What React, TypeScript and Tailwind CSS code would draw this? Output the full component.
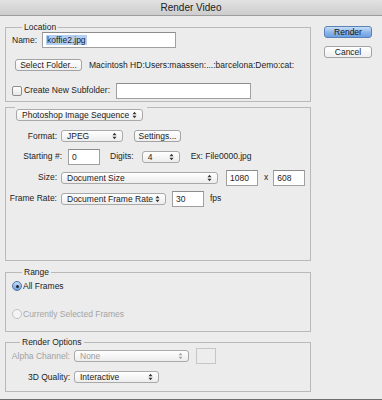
import React from 'react';

const font = { fontFamily: '"Liberation Sans", Arial, sans-serif' };

const Arrows = ({ dim }: { dim?: boolean }) => (
  <svg width="5" height="8" viewBox="0 0 5 8" className="shrink-0">
    <path d="M0.5 3.2 L2.5 0.8 L4.5 3.2 Z" fill={dim ? '#a8a8a8' : '#333'} />
    <path d="M0.5 4.8 L2.5 7.2 L4.5 4.8 Z" fill={dim ? '#a8a8a8' : '#333'} />
  </svg>
);

const Popup = ({ label, w, dim }: { label: string; w: string; dim?: boolean }) => (
  <div
    className={`${w} h-[12px] flex items-center justify-between pl-[5px] pr-[5px] rounded-[3px] border border-[#a9a9a9] bg-gradient-to-b from-white to-[#ededed] ${dim ? 'text-[#9c9c9c]' : 'text-[#1c1c1c]'}`}
  >
    <span className="leading-none">{label}</span>
    <Arrows dim={dim} />
  </div>
);

const Button = ({ label, w, blue }: { label: string; w: string; blue?: boolean }) => (
  <div
    className={`${w} h-[12px] flex items-center justify-center rounded-[3px] border leading-none ${
      blue
        ? 'border-[#5b82b8] bg-gradient-to-b from-[#c9def7] via-[#8fb8ec] to-[#6b9fe0] text-[#111]'
        : 'border-[#a3a3a3] bg-gradient-to-b from-white to-[#efefef] text-[#1c1c1c]'
    }`}
  >
    {label}
  </div>
);

const Field = ({ value, w, h = 'h-[16px]', children }: { value?: string; w: string; h?: string; children?: React.ReactNode }) => (
  <div className={`${w} ${h} flex items-center pl-[3px] bg-white border border-[#a0a0a0] border-t-[#8c8c8c] leading-none`}>
    {children ?? value}
  </div>
);

const Group = ({ title, className, children }: { title: string; className: string; children: React.ReactNode }) => (
  <fieldset className={`border border-[#b9b9b9] ${className}`}>
    <legend className="ml-[10px] px-[2px] leading-[10px] text-[#1c1c1c]">{title}</legend>
    {children}
  </fieldset>
);

export default function App() {
  return (
    <div style={font} className="w-[382px] h-[400px] bg-[#ececec] text-[8.5px] text-[#1c1c1c] flex flex-col border-b border-[#6d6d6d] overflow-hidden">
      <div className="h-[16px] shrink-0 flex items-center justify-center bg-gradient-to-b from-[#e2e2e2] to-[#cdcdcd] border-b border-[#9d9d9d] text-[10px] text-[#222]">
        Render Video
      </div>

      <div className="flex flex-1">
        <div className="w-[306px] ml-[5px] flex flex-col">
          {/* Location */}
          <Group title="Location" className="mt-[6px] h-[80px] pl-[6px]">
            <div className="flex items-center">
              <span className="w-[30px]">Name:</span>
              <Field w="w-[134px]">
                <span className="bg-[#b2cff3] px-[1px] py-[1px]">koffie2.jpg</span>
              </Field>
            </div>
            <div className="flex items-center mt-[11px] pl-[3px]">
              <Button label="Select Folder..." w="w-[67px]" />
              <span className="ml-[7px]">Macintosh HD:Users:maassen:...:barcelona:Demo:cat:</span>
            </div>
            <div className="flex items-center mt-[11px]">
              <div className="w-[10px] h-[10px] rounded-[2px] border border-[#8e8e8e] bg-gradient-to-b from-white to-[#e6e6e6]" />
              <span className="ml-[2px] w-[92px]">Create New Subfolder:</span>
              <Field w="w-[135px]" />
            </div>
          </Group>

          {/* Image sequence */}
          <div className="mt-[5px] h-[154px] border-x border-b border-[#b9b9b9] flex flex-col">
            <div className="flex h-px">
              <div className="w-[9px] bg-[#b9b9b9]" />
              <div className="w-[132px]" />
              <div className="flex-1 bg-[#b9b9b9]" />
            </div>
            <div className="pl-[10px] mt-[1px]">
              <Popup label="Photoshop Image Sequence" w="w-[127px]" />
            </div>
            <div className="flex items-center mt-[9px]">
              <span className="w-[51px] text-right">Format:</span>
              <div className="ml-[4px]"><Popup label="JPEG" w="w-[62px]" /></div>
              <div className="ml-[11px]"><Button label="Settings..." w="w-[47px]" /></div>
            </div>
            <div className="flex items-center mt-[6px]">
              <span className="w-[56px] text-right">Starting #:</span>
              <div className="ml-[6px]"><Field value="0" w="w-[32px]" /></div>
              <span className="ml-[10px]">Digits:</span>
              <div className="ml-[8px]"><Popup label="4" w="w-[38px]" /></div>
              <span className="ml-[11px]">Ex: File0000.jpg</span>
            </div>
            <div className="flex items-center mt-[5px]">
              <span className="w-[51px] text-right">Size:</span>
              <div className="ml-[4px]"><Popup label="Document Size" w="w-[157px]" /></div>
              <div className="ml-[8px]"><Field value="1080" w="w-[32px]" /></div>
              <span className="ml-[6px]">x</span>
              <div className="ml-[5px]"><Field value="608" w="w-[32px]" /></div>
            </div>
            <div className="flex items-center mt-[5px]">
              <span className="w-[51px] text-right">Frame Rate:</span>
              <div className="ml-[4px]"><Popup label="Document Frame Rate" w="w-[105px]" /></div>
              <div className="ml-[6px]"><Field value="30" w="w-[32px]" /></div>
              <span className="ml-[6px]">fps</span>
            </div>
          </div>

          {/* Range */}
          <Group title="Range" className="mt-[6px] h-[65px] pl-[6px]">
            <div className="flex items-center mt-[3px]">
              <div className="w-[10px] h-[10px] rounded-full border border-[#4f74a8] bg-gradient-to-b from-[#c5dcf6] to-[#6f9fdc] flex items-center justify-center">
                <div className="w-[3px] h-[3px] rounded-full bg-[#1b2838]" />
              </div>
              <span className="ml-[1px]">All Frames</span>
            </div>
            <div className="flex items-center mt-[15px] text-[#a4a4a4]">
              <div className="w-[10px] h-[10px] rounded-full border border-[#c2c2c2] bg-[#f4f4f4]" />
              <span className="ml-[1px]">Currently Selected Frames</span>
            </div>
          </Group>

          {/* Render Options */}
          <Group title="Render Options" className="mt-[5px] h-[55px] pl-[4px]">
            <div className="flex items-center mt-[1px]">
              <span className="w-[60px] text-right text-[#a2a2a2]">Alpha Channel:</span>
              <div className="ml-[4px]"><Popup label="None" w="w-[115px]" dim /></div>
              <div className="ml-[7px] w-[20px] h-[16px] border border-[#c6c6c6] bg-[#ededed]" />
            </div>
            <div className="flex items-center mt-[7px]">
              <span className="w-[60px] text-right">3D Quality:</span>
              <div className="ml-[4px]"><Popup label="Interactive" w="w-[85px]" /></div>
            </div>
          </Group>
        </div>

        <div className="ml-[13px] mt-[10px] flex flex-col gap-[8px]">
          <Button label="Render" w="w-[48px]" blue />
          <Button label="Cancel" w="w-[48px]" />
        </div>
      </div>
    </div>
  );
}
